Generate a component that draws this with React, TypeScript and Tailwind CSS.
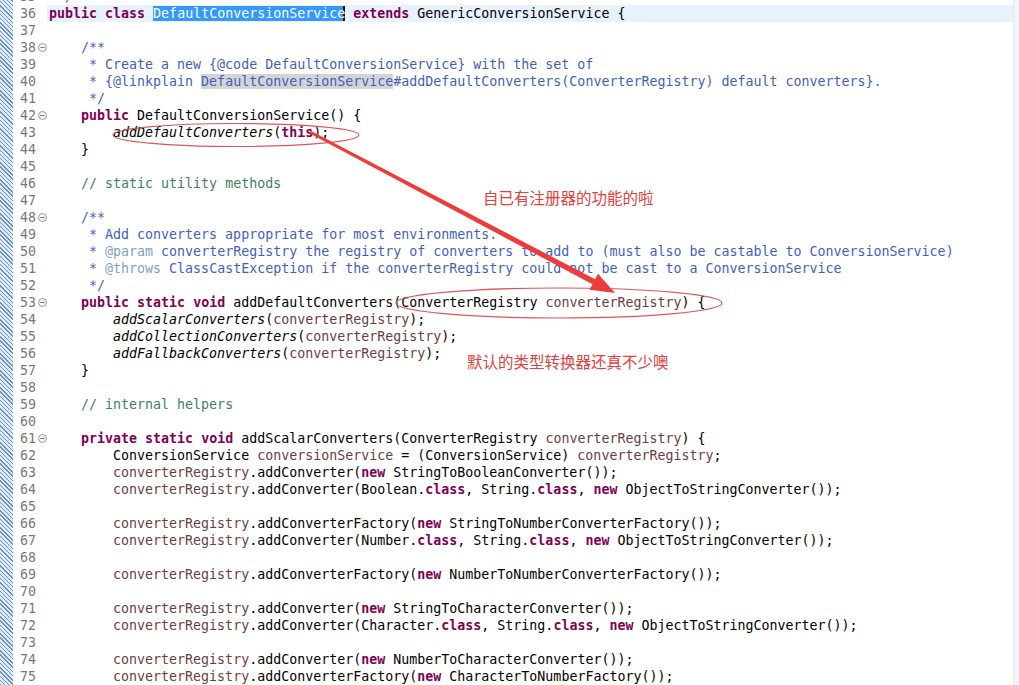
type Seg = [string, string?];

const tone: Record<string, string> = {
  k: "font-bold text-[#7f0055]",
  c: "text-[#3f5fbf]",
  t: "text-[#7f9fbf]",
  g: "text-[#3f7f5f]",
  v: "text-[#6a3e3e]",
  i: "italic text-black",
  sel: "bg-[#3399ff] text-white shadow-[inset_-2px_0_0_#111]",
  occ: "bg-[#d4d4d4] text-[#3f5fbf]",
};

const reg = (rest: Seg[]): Seg[] => [["        "], ["converterRegistry", "v"], ...rest];

const lines: { n: number; fold?: boolean; current?: boolean; segs: Seg[] }[] = [
  { n: 35, segs: [[" */", "c"]] },
  {
    n: 36,
    current: true,
    segs: [["public", "k"], [" "], ["class", "k"], [" "], ["DefaultConversionService", "sel"], [" "], ["extends", "k"], [" GenericConversionService {"]],
  },
  { n: 37, segs: [] },
  { n: 38, fold: true, segs: [["    "], ["/**", "c"]] },
  { n: 39, segs: [["     * Create a new {@code DefaultConversionService} with the set of", "c"]] },
  {
    n: 40,
    segs: [["     * {@linkplain ", "c"], ["DefaultConversionService", "occ"], ["#addDefaultConverters(ConverterRegistry) default converters}.", "c"]],
  },
  { n: 41, segs: [["     */", "c"]] },
  { n: 42, fold: true, segs: [["    "], ["public", "k"], [" DefaultConversionService() {"]] },
  { n: 43, segs: [["        "], ["addDefaultConverters", "i"], ["("], ["this", "k"], [");"]] },
  { n: 44, segs: [["    }"]] },
  { n: 45, segs: [] },
  { n: 46, segs: [["    "], ["// static utility methods", "g"]] },
  { n: 47, segs: [] },
  { n: 48, fold: true, segs: [["    "], ["/**", "c"]] },
  { n: 49, segs: [["     * Add converters appropriate for most environments.", "c"]] },
  {
    n: 50,
    segs: [["     * ", "c"], ["@param", "t"], [" converterRegistry the registry of converters to add to (must also be castable to ConversionService)", "c"]],
  },
  {
    n: 51,
    segs: [["     * ", "c"], ["@throws", "t"], [" ClassCastException if the converterRegistry could not be cast to a ConversionService", "c"]],
  },
  { n: 52, segs: [["     */", "c"]] },
  {
    n: 53,
    fold: true,
    segs: [["    "], ["public", "k"], [" "], ["static", "k"], [" "], ["void", "k"], [" addDefaultConverters(ConverterRegistry "], ["converterRegistry", "v"], [") {"]],
  },
  { n: 54, segs: [["        "], ["addScalarConverters", "i"], ["("], ["converterRegistry", "v"], [");"]] },
  { n: 55, segs: [["        "], ["addCollectionConverters", "i"], ["("], ["converterRegistry", "v"], [");"]] },
  { n: 56, segs: [["        "], ["addFallbackConverters", "i"], ["("], ["converterRegistry", "v"], [");"]] },
  { n: 57, segs: [["    }"]] },
  { n: 58, segs: [] },
  { n: 59, segs: [["    "], ["// internal helpers", "g"]] },
  { n: 60, segs: [] },
  {
    n: 61,
    fold: true,
    segs: [["    "], ["private", "k"], [" "], ["static", "k"], [" "], ["void", "k"], [" addScalarConverters(ConverterRegistry "], ["converterRegistry", "v"], [") {"]],
  },
  {
    n: 62,
    segs: [["        ConversionService "], ["conversionService", "v"], [" = (ConversionService) "], ["converterRegistry", "v"], [";"]],
  },
  { n: 63, segs: reg([[".addConverter("], ["new", "k"], [" StringToBooleanConverter());"]]) },
  {
    n: 64,
    segs: reg([[".addConverter(Boolean."], ["class", "k"], [", String."], ["class", "k"], [", "], ["new", "k"], [" ObjectToStringConverter());"]]),
  },
  { n: 65, segs: [] },
  { n: 66, segs: reg([[".addConverterFactory("], ["new", "k"], [" StringToNumberConverterFactory());"]]) },
  {
    n: 67,
    segs: reg([[".addConverter(Number."], ["class", "k"], [", String."], ["class", "k"], [", "], ["new", "k"], [" ObjectToStringConverter());"]]),
  },
  { n: 68, segs: [] },
  { n: 69, segs: reg([[".addConverterFactory("], ["new", "k"], [" NumberToNumberConverterFactory());"]]) },
  { n: 70, segs: [] },
  { n: 71, segs: reg([[".addConverter("], ["new", "k"], [" StringToCharacterConverter());"]]) },
  {
    n: 72,
    segs: reg([[".addConverter(Character."], ["class", "k"], [", String."], ["class", "k"], [", "], ["new", "k"], [" ObjectToStringConverter());"]]),
  },
  { n: 73, segs: [] },
  { n: 74, segs: reg([[".addConverter("], ["new", "k"], [" NumberToCharacterConverter());"]]) },
  { n: 75, segs: reg([[".addConverterFactory("], ["new", "k"], [" CharacterToNumberFactory());"]]) },
];

function FoldIcon() {
  return (
    <svg width="9" height="9" viewBox="0 0 9 9" className="block">
      <circle cx="4.5" cy="4.5" r="4" fill="#f4f4f4" stroke="#9a9a9a" strokeWidth="1" />
      <line x1="2.3" y1="4.5" x2="6.7" y2="4.5" stroke="#7a7a7a" strokeWidth="1" />
    </svg>
  );
}

export default function App() {
  return (
    <div className="relative w-[1019px] h-[685px] overflow-hidden bg-white flex font-['DejaVu_Sans_Mono',monospace] text-[13.3px]">
      {/* hatched overview ruler on the left */}
      <div className="w-[13px] shrink-0 bg-[#a9c4ee] bg-[repeating-linear-gradient(45deg,#5f8fdc_0px,#5f8fdc_1px,#e3ecfb_1px,#e3ecfb_3px)]" />
      <div className="flex-1 flex flex-col -mt-[12px]">
        {lines.map((l) => (
          <div key={l.n} className="flex h-[17px] leading-[17px] shrink-0">
            <div className="w-[23px] text-right text-[#787878]">{l.n}</div>
            <div className="w-[11px] flex items-center justify-center pl-[1px]">{l.fold && <FoldIcon />}</div>
            <div className={`flex-1 pl-[2px] whitespace-pre text-black ${l.current ? "bg-[#e8f2fe]" : ""}`}>
              {l.segs.map((s, i) => (
                <span key={i} className={s[1] ? tone[s[1]] : "text-black"}>
                  {s[0]}
                </span>
              ))}
            </div>
          </div>
        ))}
      </div>
      <div className="w-[6px] shrink-0 bg-[#f0f3f8] border-l border-[#e6eaf1]" />

      <svg className="absolute left-0 top-0 pointer-events-none" width="1019" height="685">
        <ellipse cx="236" cy="135" rx="123" ry="11.5" fill="none" stroke="#e05656" strokeWidth="1.2" />
        <ellipse cx="559" cy="303" rx="163" ry="15" fill="none" stroke="#e05656" strokeWidth="1.2" />
        <polygon
          points="310.7,130.7 595.1,279.3 598,273.8 615,293 589.6,289.8 592.5,284.3 309.3,133.3"
          fill="#ef3b3b"
        />
      </svg>

      <div className="absolute left-[483px] top-[187px] text-[15.5px] leading-[20px] text-[#e4403c] font-['Noto_Sans_CJK_SC',sans-serif]">
        自已有注册器的功能的啦
      </div>
      <div className="absolute left-[467px] top-[351px] text-[15.5px] leading-[20px] text-[#e4403c] font-['Noto_Sans_CJK_SC',sans-serif]">
        默认的类型转换器还真不少噢
      </div>
    </div>
  );
}
